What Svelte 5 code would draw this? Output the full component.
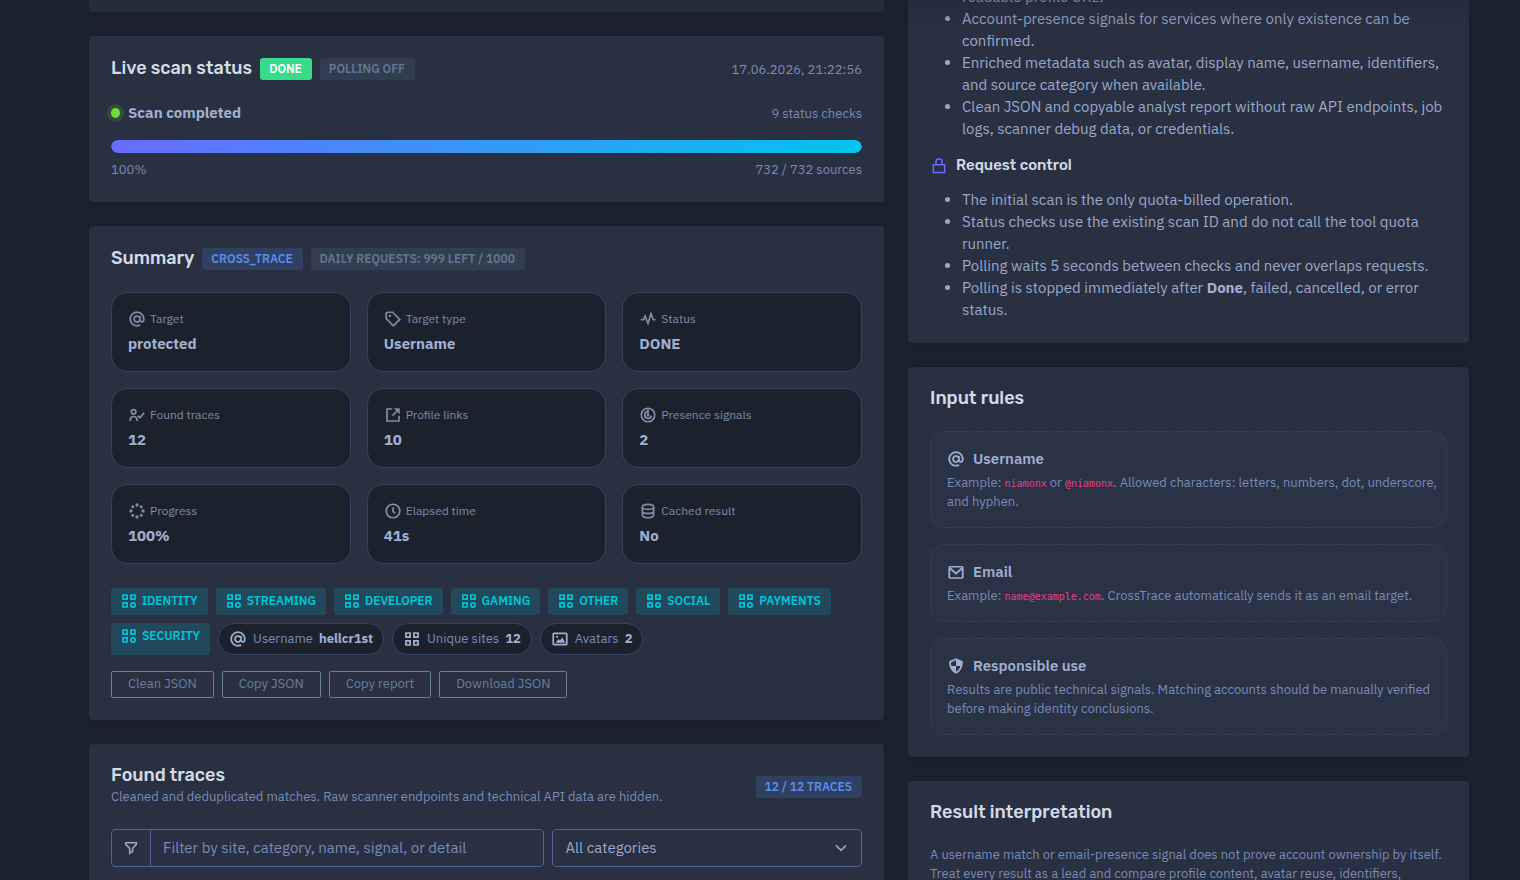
<script>
  const icons = {
    at: '<path fill="currentColor" stroke-width=".4" d="M12 2C6.486 2 2 6.486 2 12s4.486 10 10 10c1.466 0 2.961-.371 4.442-1.104l-.885-1.793C14.353 19.698 13.156 20 12 20c-4.411 0-8-3.589-8-8s3.589-8 8-8 8 3.589 8 8v1c0 .692-.313 2-1.5 2-1.396 0-1.494-1.819-1.5-2V8h-2v.025A4.954 4.954 0 0 0 12 7c-2.757 0-5 2.243-5 5s2.243 5 5 5c1.45 0 2.748-.631 3.662-1.621.524.89 1.408 1.621 2.838 1.621 2.273 0 3.5-2.061 3.5-4v-1c0-5.514-4.486-10-10-10zm0 13c-1.654 0-3-1.346-3-3s1.346-3 3-3 3 1.346 3 3-1.346 3-3 3z"/>',
    tag: '<path d="M3 5q0-2 2-2h6.500l9.500 9.500-8.500 8.500L3 11.500z"/><circle cx="8" cy="8" r="1.600" fill="currentColor" stroke="none"/>',
    pulse: '<path d="M2 13h4l2-5 4 10 4-13 3 8h3"/>',
    user: '<circle cx="7.500" cy="7.700" r="3"/><path d="M3 20v-1c0-3 2-5 4.500-5s4.500 2 4.500 5v1M13 13l3 2.600 5.500-6.600"/>',
    link: '<path d="M11 4H4v16h16v-7M11 13l8-8"/><path fill="currentColor" stroke="none" d="M13 3h8v8z"/>',
    radar: '<circle cx="12" cy="12" r="9"/><path d="M12 3v9M12 7.500a4.500 4.500 0 1 0 4.500 5.500"/><circle cx="12" cy="12" r="2" fill="currentColor" stroke="none"/>',
    loader: '<g fill="currentColor" stroke="none"><circle cx="12" cy="4" r="2.200"/><circle cx="12" cy="20" r="2.200"/><circle cx="4" cy="12" r="2.200"/><circle cx="20" cy="12" r="2.200"/><circle cx="6.400" cy="6.400" r="2"/><circle cx="17.600" cy="6.400" r="2"/><circle cx="6.400" cy="17.600" r="2"/><circle cx="17.600" cy="17.600" r="2"/></g>',
    clock: '<circle cx="12" cy="12" r="9"/><path d="M12 7v5.500l3 2.500"/>',
    data: '<ellipse cx="12" cy="6.500" rx="7.500" ry="3.200"/><path d="M4.500 6.500v11c0 1.800 3.400 3.500 7.500 3.500s7.500-1.700 7.500-3.500v-11M4.500 12c0 1.800 3.400 3.300 7.500 3.300s7.500-1.500 7.500-3.300"/>',
    category: '<path d="M4 4h5.500v5.500H4zM14.500 4H20v5.500h-5.500zM4 14.500h5.500V20H4z"/><circle cx="17.300" cy="17.300" r="2.900"/>',
    grid: '<path d="M4 4h5.500v5.500H4zM14.500 4H20v5.500h-5.500zM4 14.500h5.500V20H4zM14.500 14.500H20V20h-5.500z"/>',
    image: '<rect x="3" y="4.500" width="18" height="15" rx="1"/><path fill="currentColor" stroke="none" d="M6 17l4-5 2 2 3-4 4 7z"/><circle cx="8" cy="9" r="1.500" fill="currentColor" stroke="none"/>',
    envelope: '<rect x="3" y="5" width="18" height="15" rx="1"/><path d="M4 7l8 7 8-7"/>',
    shield: '<path d="M12 3l8 3.500c0 7-2.500 11.500-8 14.500-5.500-3-8-7.500-8-14.500z"/><path fill="currentColor" stroke="none" d="M12 3l8 3.500-.5 5.500H12zM12 12v9c-4-2-6.500-5-7.500-9z"/>',
    lock: '<path d="M4.500 11.500h15V22h-15zM8 11V7.500a4 4 0 0 1 8 0V11"/>',
    filter: '<path d="M4 4h16v2.500l-5.500 6V17L10 20v-7.500l-6-6z"/>',
    chevron: '<path d="M4.500 8l7.500 7.500L19.500 8"/>'
  };

  const stats = [
    { icon: "at", label: "Target", value: "protected" },
    { icon: "tag", label: "Target type", value: "Username" },
    { icon: "pulse", label: "Status", value: "DONE" },
    { icon: "user", label: "Found traces", value: "12" },
    { icon: "link", label: "Profile links", value: "10" },
    { icon: "radar", label: "Presence signals", value: "2" },
    { icon: "loader", label: "Progress", value: "100%" },
    { icon: "clock", label: "Elapsed time", value: "41s" },
    { icon: "data", label: "Cached result", value: "No" }
  ];

  const categories = [
    "Identity",
    "Streaming",
    "Developer",
    "Gaming",
    "Other",
    "Social",
    "Payments",
    "Security"
  ];

  const pills = [
    { icon: "at", label: "Username", value: "hellcr1st" },
    { icon: "grid", label: "Unique sites", value: "12" },
    { icon: "image", label: "Avatars", value: "2" }
  ];

  const actions = ["Clean JSON", "Copy JSON", "Copy report", "Download JSON"];

  let progress = $state(100);
  let query = $state("");
  let category = $state("all");
</script>

{#snippet icon(name)}
  <svg class="icon {name}" viewBox="0 0 24 24" aria-hidden="true">
    {@html icons[name]}
  </svg>
{/snippet}

<main>
  <div class="column">
    <section class="card tail"></section>

    <section class="card">
      <header>
        <h2>Live scan status</h2>
        <span class="badge success">Done</span>
        <span class="badge secondary">Polling off</span>
        <time class="push">17.06.2026, 21:22:56</time>
      </header>
      <div class="row state">
        <span class="dot"></span>
        <strong>Scan completed</strong>
        <small class="push">9 status checks</small>
      </div>
      <div class="track">
        <div class="bar" style="width: {progress}%"></div>
      </div>
      <div class="row counts">
        <small>{progress}%</small>
        <small class="push">732 / 732 sources</small>
      </div>
    </section>

    <section class="card">
      <header>
        <h2>Summary</h2>
        <span class="badge primary">cross_trace</span>
        <span class="badge secondary">Daily requests: 999 left / 1000</span>
      </header>
      <div class="stats">
        {#each stats as stat}
          <div class="stat">
            <span>{@render icon(stat.icon)}{stat.label}</span>
            <strong>{stat.value}</strong>
          </div>
        {/each}
      </div>
      <div class="chips">
        {#each categories as name}
          <span class="chip">{@render icon("category")}{name}</span>
        {/each}
        {#each pills as pill}
          <span class="pill">
            {@render icon(pill.icon)}{pill.label}
            <strong>{pill.value}</strong>
          </span>
        {/each}
      </div>
      <div class="actions">
        {#each actions as action}
          <button type="button">{action}</button>
        {/each}
      </div>
    </section>

    <section class="card">
      <header class="found">
        <div>
          <h2>Found traces</h2>
          <small>Cleaned and deduplicated matches. Raw scanner endpoints and technical API data are hidden.</small>
        </div>
        <span class="badge primary push">12 / 12 traces</span>
      </header>
      <div class="filters">
        <div class="group">
          <label for="query">{@render icon("filter")}</label>
          <input
            id="query"
            type="text"
            aria-label="Filter traces"
            placeholder="Filter by site, category, name, signal, or detail"
            bind:value={query} />
        </div>
        <div class="select">
          <select aria-label="Category" bind:value={category}>
            <option value="all">All categories</option>
            {#each categories as name}
              <option value={name}>{name}</option>
            {/each}
          </select>
          {@render icon("chevron")}
        </div>
      </div>
    </section>
  </div>

  <div class="column">
    <section class="card about">
      <ul>
        <li class="rest">readable profile URL.</li>
        <li>Account-presence signals for services where only existence can be confirmed.</li>
        <li>Enriched metadata such as avatar, display name, username, identifiers, and source category when available.</li>
        <li>Clean JSON and copyable analyst report without raw API endpoints, job logs, scanner debug data, or credentials.</li>
      </ul>
      <h3>{@render icon("lock")}Request control</h3>
      <ul>
        <li>The initial scan is the only quota-billed operation.</li>
        <li>Status checks use the existing scan ID and do not call the tool quota runner.</li>
        <li>Polling waits 5 seconds between checks and never overlaps requests.</li>
        <li>Polling is stopped immediately after <strong>Done</strong>, failed, cancelled, or error status.</li>
      </ul>
    </section>

    <section class="card">
      <header><h2>Input rules</h2></header>
      <div class="rules">
        <article>
          <h4>{@render icon("at")}Username</h4>
          <p>Example: <code>niamonx</code> or <code>@niamonx</code>. Allowed characters: letters, numbers, dot, underscore, and hyphen.</p>
        </article>
        <article>
          <h4>{@render icon("envelope")}Email</h4>
          <p>Example: <code>name@example.com</code>. CrossTrace automatically sends it as an email target.</p>
        </article>
        <article>
          <h4>{@render icon("shield")}Responsible use</h4>
          <p>Results are public technical signals. Matching accounts should be manually verified before making identity conclusions.</p>
        </article>
      </div>
    </section>

    <section class="card">
      <header><h2>Result interpretation</h2></header>
      <p>A username match or email-presence signal does not prove account ownership by itself. Treat every result as a lead and compare profile content, avatar reuse, identifiers,</p>
    </section>
  </div>
</main>

<style>
  :global(body) {
    background-color: #1c222f;
  }
  main {
    --cl-card: #283042;
    --cl-dark: #1c212e;
    --cl-text: #9aa9c9;
    --cl-strong: #a1b0d0;
    --cl-muted: #798cb6;
    --cl-head: #d5dbe6;
    --cl-line: #33445e;

    position: relative;
    box-sizing: border-box;
    height: 100vh;
    overflow: hidden;
    padding: 0 39px 0 77px;
    display: grid;
    grid-template-columns: 7fr 5fr;
    font-family: "IBM Plex Sans", Roboto, sans-serif;
    font-size: 15px;
    line-height: 22px;
    color: var(--cl-text);
  }
  main::before {
    content: "";
    position: absolute;
    top: 0;
    left: 0;
    right: 0;
    height: 32px;
    pointer-events: none;
    background: linear-gradient(rgba(28, 34, 47, 0.3), transparent);
  }
  .column {
    display: flex;
    flex-direction: column;
    gap: 24px;
    padding: 0 12px;
    min-width: 0;
  }
  .card {
    padding: 22px;
    border-radius: 4px;
    background-color: var(--cl-card);
    box-shadow: 0 3px 12px rgba(16, 20, 29, 0.36);
  }
  .tail {
    padding: 6px;
    border-radius: 0 0 4px 4px;
  }
  .about {
    margin-top: -14px;
    padding-top: 0;
  }
  header,
  .row {
    display: flex;
    align-items: center;
    gap: 8px;
  }
  header {
    margin-bottom: 22px;
  }
  h2,
  h3,
  h4,
  p,
  ul {
    margin: 0;
  }
  h2 {
    padding-bottom: 2px;
    font-family: Rubik, Roboto, sans-serif;
    font-size: 18px;
    line-height: 18px;
    font-weight: 500;
    color: var(--cl-head);
  }
  small,
  time,
  p {
    font-size: 13px;
    line-height: 19px;
    color: var(--cl-muted);
  }
  .push {
    margin-left: auto;
  }
  .icon {
    flex: none;
    width: 18px;
    height: 18px;
    fill: none;
    stroke: currentColor;
    stroke-width: 2.3;
  }
  .badge {
    padding: 0 10px 0 9px;
    border-radius: 3px;
    font-size: 12px;
    line-height: 22px;
    font-weight: 600;
    text-transform: uppercase;
    white-space: nowrap;
  }
  .success {
    background-color: #39da8a;
    color: white;
  }
  .secondary {
    background-color: #313e50;
    color: #637791;
  }
  .primary {
    background-color: #2f4060;
    color: #5a8dee;
  }
  .state {
    margin-bottom: 16px;
  }
  .dot {
    width: 9px;
    height: 10px;
    border-radius: 50%;
    background-color: #71dd37;
    box-shadow: 0 0 0 4px rgba(113, 221, 55, 0.16);
  }
  .track {
    height: 13px;
    border-radius: 7px;
    background-color: var(--cl-dark);
    overflow: hidden;
  }
  .bar {
    height: 100%;
    border-radius: 7px;
    background: linear-gradient(90deg, #696cff, #03c3ec);
  }
  .counts {
    margin-top: 6px;
  }
  .counts small {
    line-height: 21px;
  }
  .stats {
    display: grid;
    grid-template-columns: repeat(3, 1fr);
    gap: 16px;
  }
  .stat {
    display: grid;
    gap: 4px;
    padding: 16px;
    border: 1px solid var(--cl-line);
    border-radius: 16px;
    background-color: var(--cl-dark);
  }
  .stat span {
    display: flex;
    align-items: center;
    gap: 4px;
    font-size: 12px;
    line-height: 20px;
    color: #808ca5;
  }
  strong {
    font-weight: 700;
    color: var(--cl-strong);
  }
  .chips,
  .actions {
    display: flex;
    flex-wrap: wrap;
    gap: 8px;
  }
  .chips {
    margin: 24px 0 16px;
  }
  .chip {
    display: flex;
    align-items: flex-start;
    gap: 4px;
    padding: 4px 10px 5px 9px;
    border-radius: 3px;
    background-color: #21495b;
    font-size: 12px;
    line-height: 18px;
    font-weight: 600;
    text-transform: uppercase;
    color: #00c5d8;
  }
  .pill {
    display: flex;
    align-items: center;
    gap: 6px;
    padding: 4px 10px;
    border: 1px solid var(--cl-line);
    border-radius: 16px;
    background-color: var(--cl-dark);
    font-size: 13px;
    color: var(--cl-muted);
  }
  .pill .icon {
    color: var(--cl-strong);
  }
  button {
    padding: 0 16px 2px;
    border: 1px solid #69809a;
    border-radius: 2px;
    background: none;
    font: inherit;
    font-size: 13px;
    line-height: 23px;
    color: #69809a;
    cursor: pointer;
  }
  .found small {
    display: block;
    line-height: 21px;
  }
  .filters {
    display: grid;
    grid-template-columns: 7fr 5fr;
    gap: 8px;
  }
  .group,
  .select {
    box-sizing: border-box;
    display: flex;
    height: 38px;
    border: 1px solid #4d6592;
    border-radius: 4px;
    position: relative;
  }
  .group label {
    display: grid;
    place-items: center;
    width: 38px;
    border-right: 1px solid #4d6592;
  }
  .filter,
  .chevron {
    width: 16px;
    height: 16px;
  }
  input,
  select {
    flex: 1;
    min-width: 0;
    padding: 0 12px;
    border: 0;
    outline: 0;
    background: none;
    appearance: none;
    font: inherit;
    color: var(--cl-text);
  }
  input::placeholder {
    color: var(--cl-muted);
    opacity: 1;
  }
  option {
    background-color: var(--cl-card);
  }
  .chevron {
    position: absolute;
    top: 10px;
    right: 12px;
    pointer-events: none;
  }
  ul {
    padding-left: 32px;
  }
  .rest {
    list-style: none;
  }
  h3 {
    display: flex;
    align-items: center;
    gap: 8px;
    margin: 14px 0 13px;
    font-family: Rubik, Roboto, sans-serif;
    font-size: 15px;
    font-weight: 500;
    color: var(--cl-head);
  }
  .lock {
    color: #696cff;
    stroke-width: 2;
  }
  .rules {
    display: grid;
    gap: 16px;
  }
  article {
    padding: 16px 8px 16px 16px;
    border: 1px dashed #35455f;
    border-radius: 16px;
    background-color: #2a3246;
  }
  h4 {
    display: flex;
    align-items: center;
    gap: 8px;
    margin-bottom: 3px;
    font-size: 15px;
    font-weight: 600;
    color: var(--cl-strong);
  }
  code {
    font-family: "DejaVu Sans Mono", monospace;
    font-size: 10px;
    line-height: 1;
    color: #e83e8c;
  }
</style>
